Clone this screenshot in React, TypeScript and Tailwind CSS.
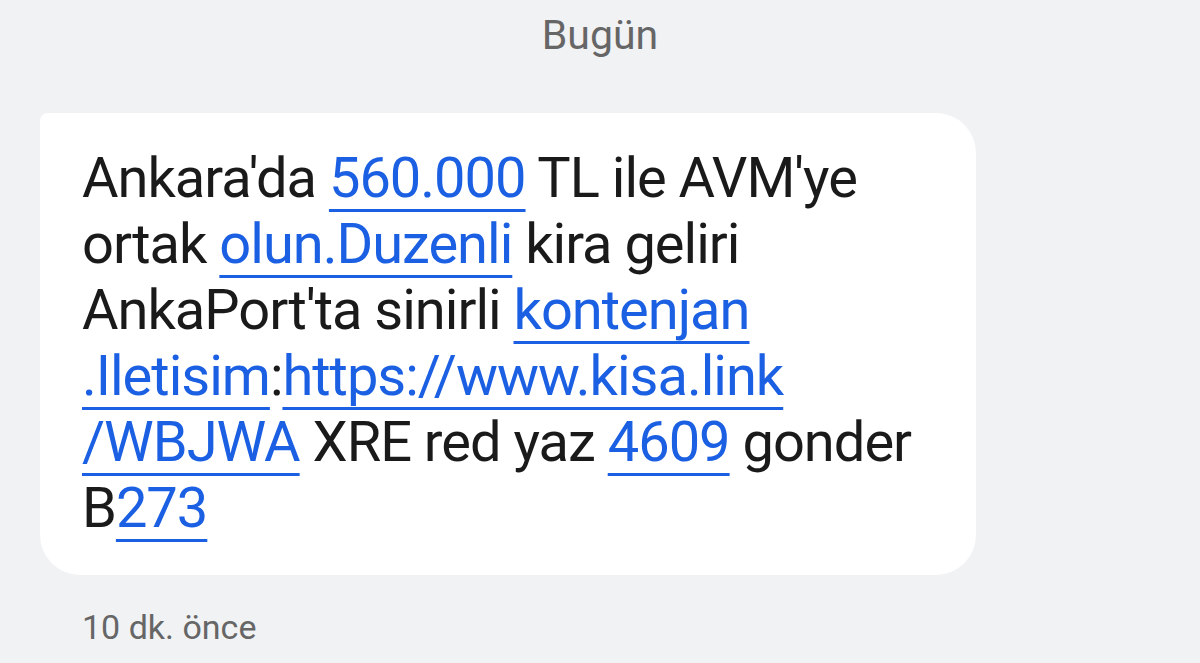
import type { ReactNode } from 'react';

function Link({ children }: { children: ReactNode }) {
    return (
        <span className="text-[#1b5fe3] underline decoration-[3px] underline-offset-[12px]">
            {children}
        </span>
    );
}

export default function App() {
    return (
        <div className="w-[1200px] h-[663px] overflow-hidden bg-[#f1f2f4] font-['Roboto',sans-serif]">
            <div className="h-[113px] pt-[12px] text-center text-[41px] leading-[46px] text-[#666666]">
                Bugün
            </div>

            <div className="ml-[40px] w-[936px] h-[462px] rounded-[40px] rounded-tl-[8px] bg-white pl-[42px] pt-[32px]">
                <div className="text-[56px] leading-[66px] tracking-[-1px] text-[#1a1a1a] whitespace-nowrap">
                    <div>Ankara'da <Link>560.000</Link> TL ile AVM'ye</div>
                    <div>ortak <Link>olun.Duzenli</Link> kira geliri</div>
                    <div>AnkaPort'ta sinirli <Link>kontenjan</Link></div>
                    <div><Link>.Iletisim</Link>:<Link>https://www.kisa.link</Link></div>
                    <div><Link>/WBJWA</Link> XRE red yaz <Link>4609</Link> gonder</div>
                    <div>B<Link>273</Link></div>
                </div>
            </div>

            <div className="pl-[82px] pt-[32px] text-[34px] leading-[40px] text-[#666666]">
                10 dk. önce
            </div>
        </div>
    );
}
